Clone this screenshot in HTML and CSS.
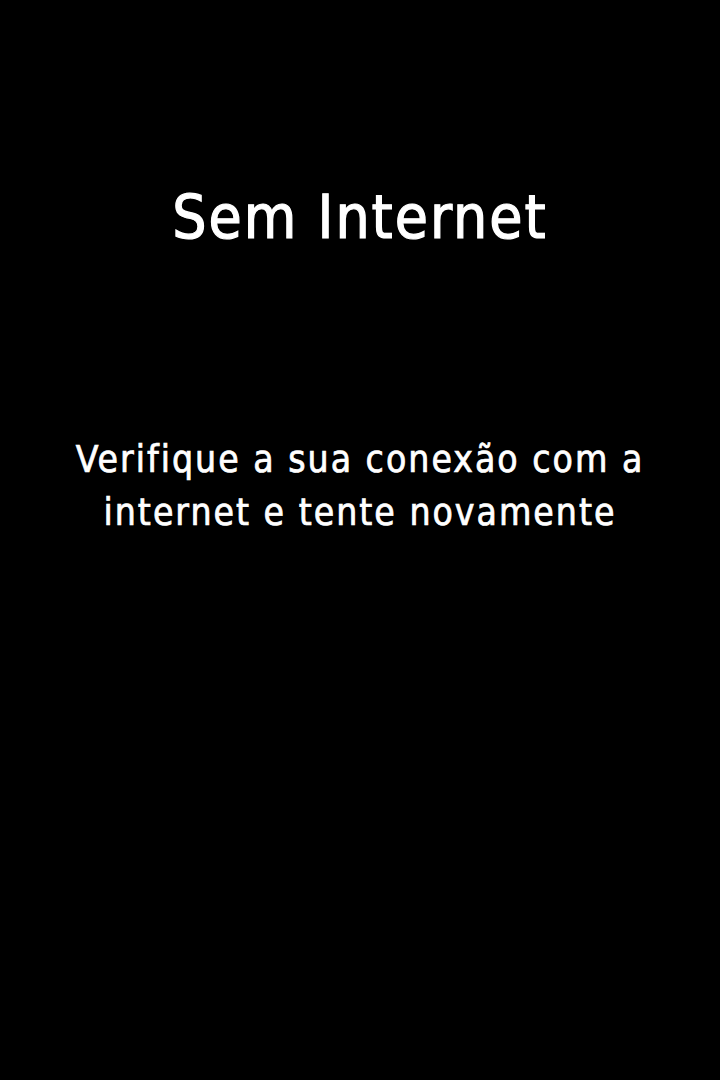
FILE: index.html
```html
<!DOCTYPE html>
<html>
<head>
<meta charset="utf-8">
<link rel="stylesheet" href="styles.css">
</head>
<body>
<main class="screen">
  <h1 class="title">Sem Internet</h1>
  <p class="message">Verifique a sua conexão com a internet e tente novamente</p>
</main>
</body>
</html>
```
FILE: styles.css
```css
html, body {
  margin: 0;
  padding: 0;
  background: #000;
}
.screen {
  width: 720px;
  height: 1080px;
  display: flex;
  flex-direction: column;
  align-items: center;
  color: #fff;
  font-family: "DejaVu Sans Condensed", "DejaVu Sans", sans-serif;
}
.title {
  margin: 177px 0 0 0;
  font-size: 60px;
  font-weight: normal;
  line-height: 80px;
  letter-spacing: 2px;
  -webkit-text-stroke: 1.2px #fff;
}
.message {
  margin: 176px 0 0 0;
  width: 620px;
  text-align: center;
  font-size: 37px;
  line-height: 53px;
  letter-spacing: 2px;
  -webkit-text-stroke: 0.7px #fff;
}
```
